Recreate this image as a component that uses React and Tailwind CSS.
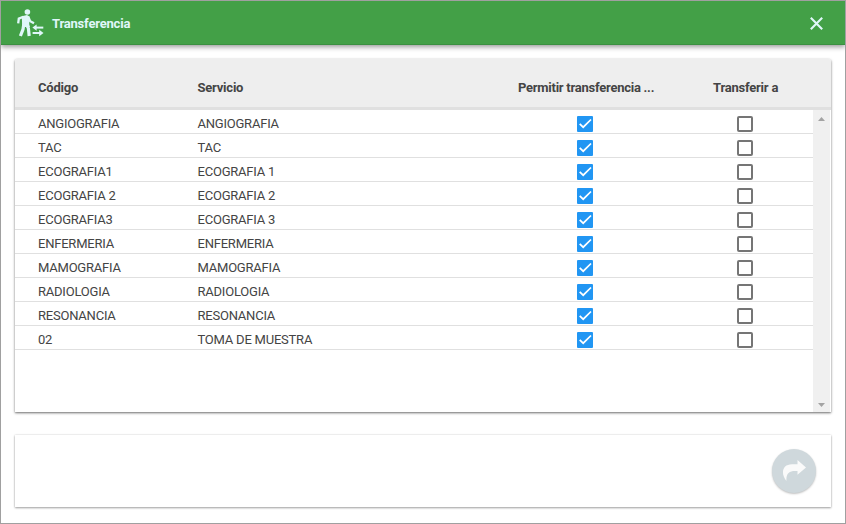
const rows = [
  ['ANGIOGRAFIA', 'ANGIOGRAFIA'],
  ['TAC', 'TAC'],
  ['ECOGRAFIA1', 'ECOGRAFIA 1'],
  ['ECOGRAFIA 2', 'ECOGRAFIA 2'],
  ['ECOGRAFIA3', 'ECOGRAFIA 3'],
  ['ENFERMERIA', 'ENFERMERIA'],
  ['MAMOGRAFIA', 'MAMOGRAFIA'],
  ['RADIOLOGIA', 'RADIOLOGIA'],
  ['RESONANCIA', 'RESONANCIA'],
  ['02', 'TOMA DE MUESTRA'],
];

function WalkIcon() {
  return (
    <svg width="28" height="28" viewBox="0 0 28 28" fill="none" stroke="#e0f7fa" className="shrink-0">
      <circle cx="11.4" cy="3" r="2.8" fill="#e0f7fa" stroke="none" />
      <path d="M5.8 7.2 L11 6 L13.4 7.4 L13.2 15.2 L14 18 L6.2 18 Z" fill="#e0f7fa" stroke="none" />
      <path d="M7.4 7.7 L2.8 9.6 L2.2 14.4" strokeWidth="2.3" />
      <path d="M12.2 7.6 L14.2 12.2 L18 14.2" strokeWidth="2.3" />
      <path d="M7.8 15 L7 20.4 L4.4 27" strokeWidth="3.2" />
      <path d="M10.2 15 L12.4 19.4 L13.2 27" strokeWidth="3.2" />
      <path d="M27.3 18.6 H19" strokeWidth="2" />
      <path d="M20.6 15.5 V21.7 L16.4 18.6 Z" fill="#e0f7fa" stroke="none" />
      <path d="M16.6 24 H24.4" strokeWidth="2" />
      <path d="M23.2 20.8 V27.2 L27.5 24 Z" fill="#e0f7fa" stroke="none" />
    </svg>
  );
}

function Checkbox({ checked }) {
  return checked ? (
    <span className="flex h-4 w-4 rounded-[1px] bg-[#2196f3]">
      <svg width="16" height="16" viewBox="0 0 16 16" fill="none">
        <path d="M2.7 7.8 L6.2 11.2 L14 3.5" stroke="#fff" strokeWidth="1.7" />
      </svg>
    </span>
  ) : (
    <span className="block h-4 w-4 rounded-[2px] border-2 border-[#757575] bg-white" />
  );
}

export default function App() {
  return (
    <div className="flex h-[524px] w-[846px] flex-col overflow-hidden border border-[#a0a0a0] bg-white font-[Roboto,sans-serif] text-[13px] tracking-[-0.22px] text-[#444]">
      <header className="flex h-11 shrink-0 items-center border-b border-[#3a9040] bg-[#43a047] pl-[15px] pr-[22px] text-[#e0f7fa] shadow-[0_2px_5px_rgba(0,0,0,0.4)]">
        <WalkIcon />
        <h1 className="ml-2 grow pt-0.5 font-bold tracking-[-0.2px]">Transferencia</h1>
        <button aria-label="Cerrar" className="pt-0.5">
          <svg width="13" height="13" viewBox="0 0 13 13" stroke="#e0f7fa" strokeWidth="2.1">
            <path d="M.8 .8 L12.2 12.2 M12.2 .8 L.8 12.2" />
          </svg>
        </button>
      </header>

      <section className="mx-3.5 mt-3.5 flex h-[353px] shrink-0 flex-col rounded-t-[2px] bg-white shadow-[0_1px_3px_rgba(0,0,0,0.35),0_1px_2px_rgba(0,0,0,0.3)]">
        <div className="grid h-[51px] shrink-0 grid-cols-[160px_300px_160px_155px] items-center rounded-t-[2px] border-b-3 border-[#e0e0e0] bg-[#eee] pl-[23px] pt-2.5 font-bold">
          <span>Código</span>
          <span className="-ml-[0.5px]">Servicio</span>
          <span className="ml-5 whitespace-nowrap tracking-[-0.25px]">Permitir transferencia ...</span>
          <span className="ml-[55px]">Transferir a</span>
        </div>
        <div className="flex grow">
          <div className="min-w-0 grow">
            {rows.map(([code, service]) => (
              <div key={code} className="grid h-6 grid-cols-[160px_300px_160px_155px] border-b border-[#e0e0e0] pl-[23px]">
                <span className="pt-1 leading-5">{code}</span>
                <span className="-ml-[0.5px] pt-1 leading-5">{service}</span>
                <span className="ml-[79px] pt-1.5"><Checkbox checked /></span>
                <span className="ml-[79px] pt-1.5"><Checkbox /></span>
              </div>
            ))}
          </div>
          <div className="mr-px flex w-[17px] shrink-0 flex-col items-center justify-between bg-[#f0f0f0] pb-[5px] pt-[7px]">
            <svg width="7" height="4" viewBox="0 0 7 4" fill="#a3a3a3"><path d="M0 4 L3.5 0 L7 4 Z" /></svg>
            <svg width="7" height="4" viewBox="0 0 7 4" fill="#a3a3a3"><path d="M0 0 L3.5 4 L7 0 Z" /></svg>
          </div>
        </div>
      </section>

      <footer className="mx-3.5 mt-[23px] flex h-[72px] shrink-0 items-center justify-end bg-white pr-[15px] shadow-[0_1px_2px_rgba(0,0,0,0.35),0_0_2px_rgba(0,0,0,0.15)]">
        <button aria-label="Transferir" className="flex h-11 w-11 items-center justify-center rounded-full bg-[#cfd8dc] shadow-[0_1px_2px_rgba(0,0,0,0.25)]">
          <svg width="24" height="22" viewBox="0 0 24 22" fill="#fafafa">
            <path d="M15.5 0 L24 7.4 L15.5 14.8 V11 C8 10.4 4 12.2 4.4 21 C-1.6 13.6 .2 4.2 10 4.2 H15.5 Z" />
          </svg>
        </button>
      </footer>
    </div>
  );
}
